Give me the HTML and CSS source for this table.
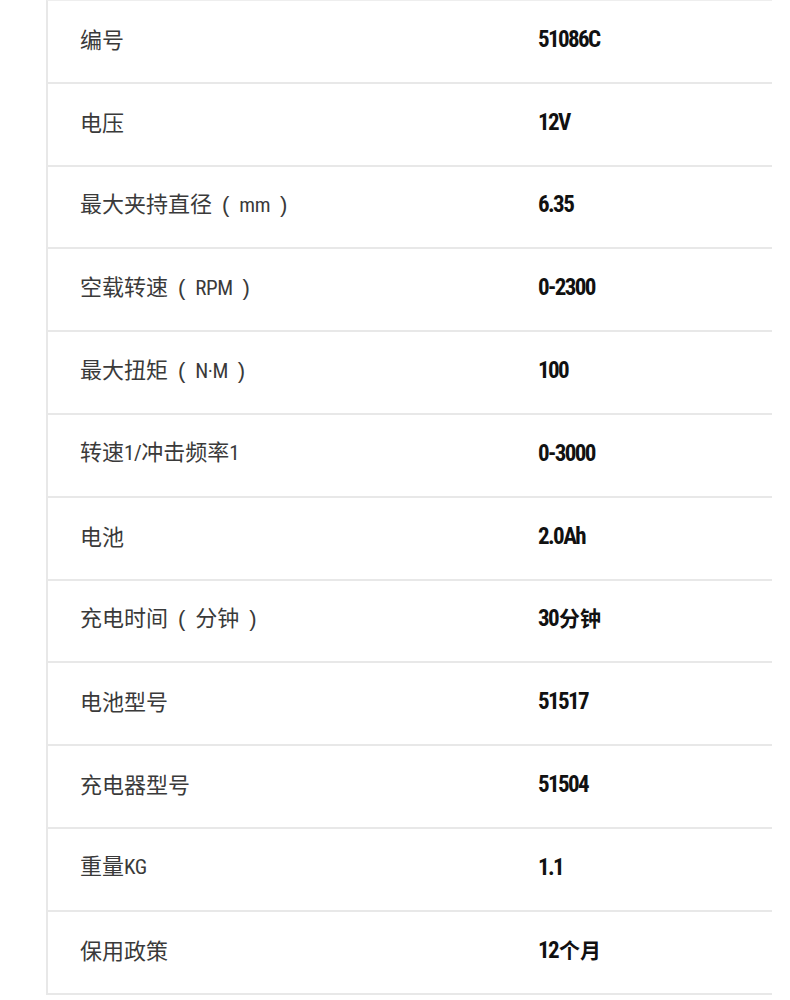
FILE: index.html
```html
<!DOCTYPE html>
<html lang="zh-CN">
<head>
<meta charset="utf-8">
<title>参数</title>
<link rel="stylesheet" href="styles.css">
</head>
<body>
<div class="spec">
  <div class="row"><div class="label">编号</div><div class="value">51086C</div></div>
  <div class="row"><div class="label">电压</div><div class="value">12V</div></div>
  <div class="row"><div class="label">最大夹持直径<span class="p">(</span><span class="lat">mm</span><span class="p">)</span></div><div class="value">6.35</div></div>
  <div class="row"><div class="label">空载转速<span class="p">(</span><span class="lat">RPM</span><span class="p">)</span></div><div class="value">0-2300</div></div>
  <div class="row"><div class="label">最大扭矩<span class="p">(</span><span class="lat">N·M</span><span class="p">)</span></div><div class="value">100</div></div>
  <div class="row"><div class="label">转速<span class="lat">1/</span>冲击频率<span class="lat">1</span></div><div class="value">0-3000</div></div>
  <div class="row"><div class="label">电池</div><div class="value">2.0Ah</div></div>
  <div class="row"><div class="label">充电时间<span class="p">(</span>分钟<span class="p">)</span></div><div class="value">30<span class="cjk">分钟</span></div></div>
  <div class="row"><div class="label">电池型号</div><div class="value">51517</div></div>
  <div class="row"><div class="label">充电器型号</div><div class="value">51504</div></div>
  <div class="row"><div class="label">重量<span class="lat">KG</span></div><div class="value">1.1</div></div>
  <div class="row"><div class="label">保用政策</div><div class="value">12<span class="cjk">个月</span></div></div>
</div>
</body>
</html>
```

FILE: styles.css
```css
html, body {
  margin: 0;
  padding: 0;
  background: #ffffff;
}

.spec {
  box-sizing: border-box;
  margin-left: 46px;
  width: 726px;
  border-top: 1px solid #eeeeee;
  border-left: 2px solid #e8e8e8;
}

.row {
  display: grid;
  grid-template-columns: 458px 1fr;
  align-items: center;
  height: 80.8px;
  border-bottom: 2px solid #e8e8e8;
}

.label,
.value {
  padding-left: 32px;
}

.label {
  font-family: "Noto Sans CJK SC", "Noto Sans", sans-serif;
  font-size: 22px;
  color: #3a3a3a;
  line-height: 1;
  padding-bottom: 7px;
}

.p {
  font-family: "Liberation Sans", sans-serif;
  font-weight: normal;
  font-size: 22px;
  margin: 0 10px;
  color: #3a3a3a;
}

.lat {
  font-family: "Roboto Condensed", "Open Sans", sans-serif;
  font-stretch: 75%;
  font-size: 21px;
  letter-spacing: -0.5px;
  color: #3a3a3a;
}

.value {
  font-family: "Roboto Condensed", "Open Sans", sans-serif;
  font-stretch: 75%;
  font-weight: bold;
  font-size: 23px;
  letter-spacing: -1.6px;
  color: #111111;
  line-height: 1;
  padding-bottom: 4px;
}

.cjk {
  font-family: "Noto Sans CJK SC", sans-serif;
  font-weight: bold;
  font-size: 21px;
  letter-spacing: 0;
  margin-left: 1px;
}
```
